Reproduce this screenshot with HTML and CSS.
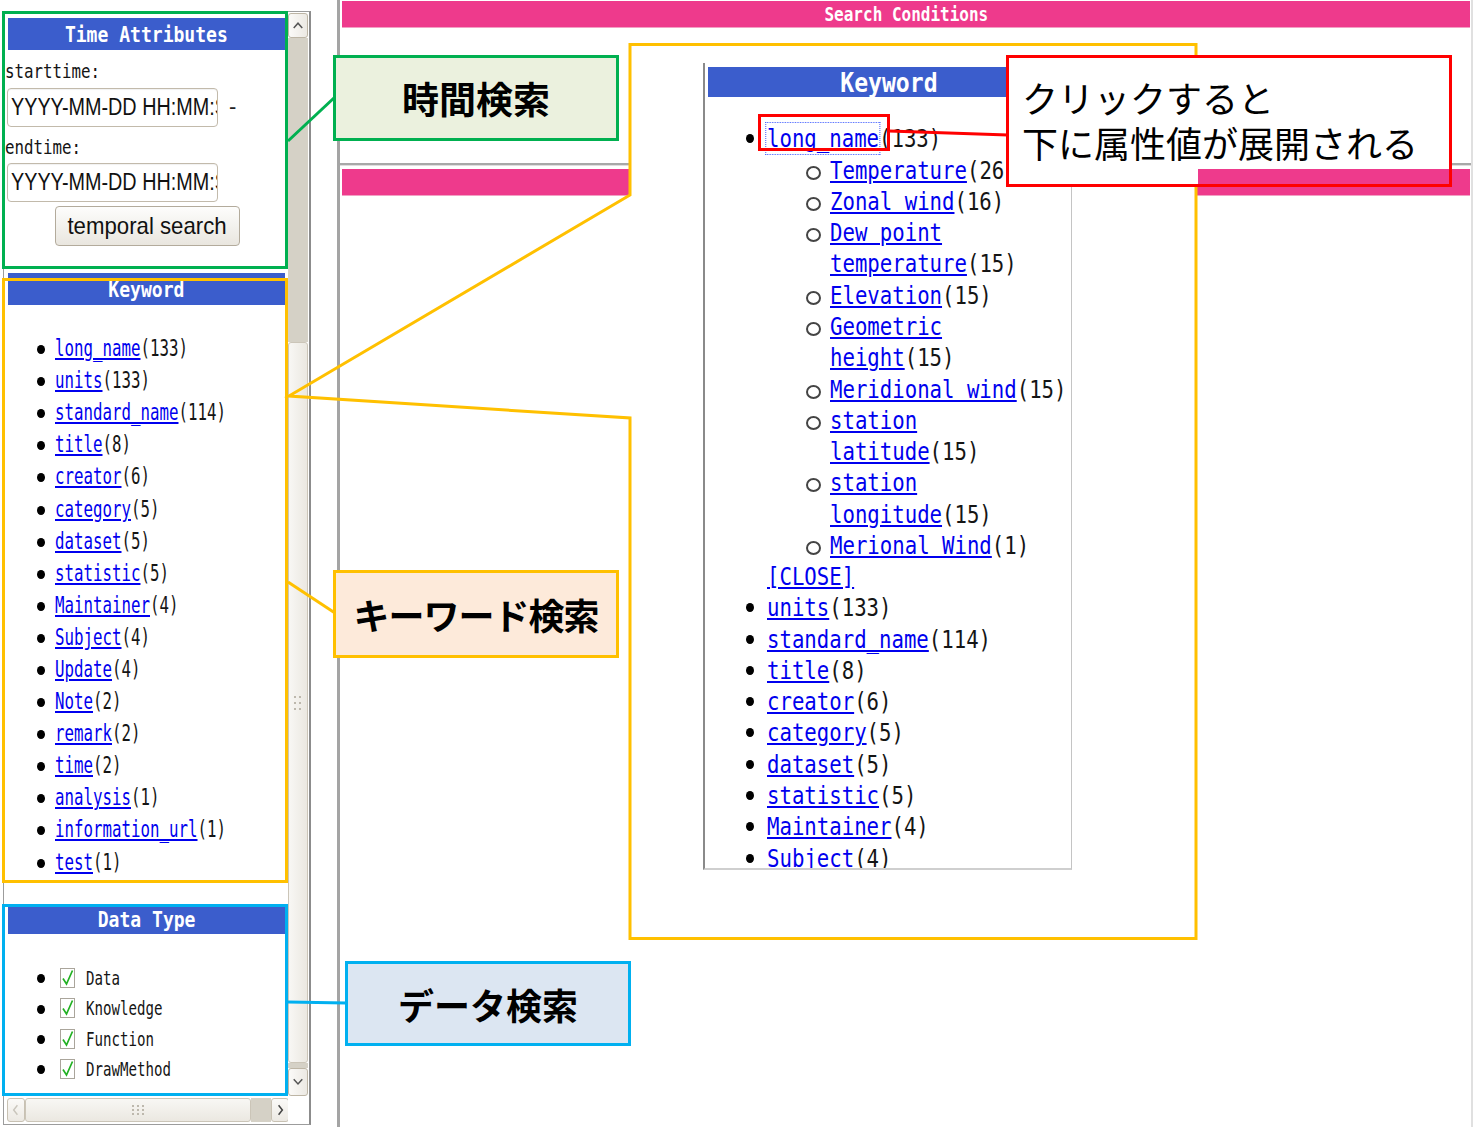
FILE: index.html
```html
<!DOCTYPE html>
<html lang="ja">
<head>
<meta charset="utf-8">
<title>Search Conditions</title>
<link rel="stylesheet" href="styles.css">
</head>
<body>
<div class="page">
  <aside class="left-frame">
    <div class="lf-content">
      <div class="sec-head time-head"><span class="sq-c hb">Time Attributes</span></div>
      <div class="lbl lbl-start"><span class="sq lb">starttime:</span></div>
      <div class="field-row">
        <div class="field"><span class="sq fv">YYYY-MM-DD HH:MM:SS</span></div>
        <span class="dash">-</span>
      </div>
      <div class="lbl lbl-end"><span class="sq lb">endtime:</span></div>
      <div class="field-row">
        <div class="field"><span class="sq fv">YYYY-MM-DD HH:MM:SS</span></div>
      </div>
      <div class="btn-row"><button class="btn" type="button"><span class="sq-c bt">temporal search</span></button></div>

      <div class="sec-head kw-head"><span class="sq-c hb">Keyword</span></div>
      <ul class="kw-list">
        <li><span class="sq t"><a href="#">long_name</a>(133)</span></li>
        <li><span class="sq t"><a href="#">units</a>(133)</span></li>
        <li><span class="sq t"><a href="#">standard_name</a>(114)</span></li>
        <li><span class="sq t"><a href="#">title</a>(8)</span></li>
        <li><span class="sq t"><a href="#">creator</a>(6)</span></li>
        <li><span class="sq t"><a href="#">category</a>(5)</span></li>
        <li><span class="sq t"><a href="#">dataset</a>(5)</span></li>
        <li><span class="sq t"><a href="#">statistic</a>(5)</span></li>
        <li><span class="sq t"><a href="#">Maintainer</a>(4)</span></li>
        <li><span class="sq t"><a href="#">Subject</a>(4)</span></li>
        <li><span class="sq t"><a href="#">Update</a>(4)</span></li>
        <li><span class="sq t"><a href="#">Note</a>(2)</span></li>
        <li><span class="sq t"><a href="#">remark</a>(2)</span></li>
        <li><span class="sq t"><a href="#">time</a>(2)</span></li>
        <li><span class="sq t"><a href="#">analysis</a>(1)</span></li>
        <li><span class="sq t"><a href="#">information_url</a>(1)</span></li>
        <li><span class="sq t"><a href="#">test</a>(1)</span></li>
      </ul>

      <div class="sec-head dt-head"><span class="sq-c hb">Data Type</span></div>
      <ul class="dt-list">
        <li><svg class="cb" width="15" height="20" viewBox="0 0 15 20"><rect x="0.5" y="0.5" width="14" height="19" fill="#fff" stroke="#aaa59b"/><path d="M3 10.5 L6.5 16 L12.5 2.5" fill="none" stroke="#22b022" stroke-width="1.7"/></svg><span class="sq d">Data</span></li>
        <li><svg class="cb" width="15" height="20" viewBox="0 0 15 20"><rect x="0.5" y="0.5" width="14" height="19" fill="#fff" stroke="#aaa59b"/><path d="M3 10.5 L6.5 16 L12.5 2.5" fill="none" stroke="#22b022" stroke-width="1.7"/></svg><span class="sq d">Knowledge</span></li>
        <li><svg class="cb" width="15" height="20" viewBox="0 0 15 20"><rect x="0.5" y="0.5" width="14" height="19" fill="#fff" stroke="#aaa59b"/><path d="M3 10.5 L6.5 16 L12.5 2.5" fill="none" stroke="#22b022" stroke-width="1.7"/></svg><span class="sq d">Function</span></li>
        <li><svg class="cb" width="15" height="20" viewBox="0 0 15 20"><rect x="0.5" y="0.5" width="14" height="19" fill="#fff" stroke="#aaa59b"/><path d="M3 10.5 L6.5 16 L12.5 2.5" fill="none" stroke="#22b022" stroke-width="1.7"/></svg><span class="sq d">DrawMethod</span></li>
      </ul>
    </div>

    <div class="vscroll">
      <div class="sb-btn sb-up"><svg width="19" height="24" viewBox="0 0 19 24"><polyline points="5,14 9.5,9 14,14" fill="none" stroke="#555" stroke-width="1.6"/></svg></div>
      <div class="sb-track sb-track-top"></div>
      <div class="sb-thumb"><svg width="10" height="16" viewBox="0 0 10 16"><g fill="#bdb8ad"><rect x="1" y="1" width="2" height="2"/><rect x="6" y="1" width="2" height="2"/><rect x="1" y="7" width="2" height="2"/><rect x="6" y="7" width="2" height="2"/><rect x="1" y="13" width="2" height="2"/><rect x="6" y="13" width="2" height="2"/></g></svg></div>
      <div class="sb-track sb-track-bot"></div>
      <div class="sb-btn sb-down"><svg width="19" height="26" viewBox="0 0 19 26"><polyline points="5,10 9.5,15 14,10" fill="none" stroke="#555" stroke-width="1.6"/></svg></div>
    </div>

    <div class="hscroll">
      <div class="hb-btn hb-left"><svg width="17" height="22" viewBox="0 0 17 22"><polyline points="10,6 6,11 10,16" fill="none" stroke="#c9c5bc" stroke-width="1.5"/></svg></div>
      <div class="hb-thumb"><svg width="12" height="10" viewBox="0 0 12 10"><g fill="#bdb8ad"><rect x="0" y="0" width="2" height="2"/><rect x="5" y="0" width="2" height="2"/><rect x="10" y="0" width="2" height="2"/><rect x="0" y="4" width="2" height="2"/><rect x="5" y="4" width="2" height="2"/><rect x="10" y="4" width="2" height="2"/><rect x="0" y="8" width="2" height="2"/><rect x="5" y="8" width="2" height="2"/><rect x="10" y="8" width="2" height="2"/></g></svg></div>
      <div class="hb-track"></div>
      <div class="hb-btn hb-right"><svg width="17" height="22" viewBox="0 0 17 22"><polyline points="7,6 11,11 7,16" fill="none" stroke="#444" stroke-width="1.6"/></svg></div>
    </div>
    <div class="corner"></div>
  </aside>

  <main class="right-frame">
    <section class="top-frame">
      <div class="pink-bar"><span class="sq-c pb">Search Conditions</span></div>
    </section>
    <section class="bottom-frame">
      <div class="pink-bar"></div>
    </section>
  </main>
</div>

<!-- zoomed inset pasted on the slide -->
<div class="zoom-area"></div>
<div class="inset">
  <div class="in-head"><span class="sq-c ihb">Keyword</span></div>
  <ul class="in-list">
    <li class="item">
      <span class="sq t"><a class="focus" href="#">long_name</a>(133)</span>
      <ul class="sub-list">
        <li class="sub"><span class="sq t"><a href="#">Temperature</a>(26)</span></li>
        <li class="sub"><span class="sq t"><a href="#">Zonal wind</a>(16)</span></li>
        <li class="sub"><span class="sq t"><a href="#">Dew point<br>temperature</a>(15)</span></li>
        <li class="sub"><span class="sq t"><a href="#">Elevation</a>(15)</span></li>
        <li class="sub"><span class="sq t"><a href="#">Geometric<br>height</a>(15)</span></li>
        <li class="sub"><span class="sq t"><a href="#">Meridional wind</a>(15)</span></li>
        <li class="sub"><span class="sq t"><a href="#">station<br>latitude</a>(15)</span></li>
        <li class="sub"><span class="sq t"><a href="#">station<br>longitude</a>(15)</span></li>
        <li class="sub"><span class="sq t"><a href="#">Merional Wind</a>(1)</span></li>
      </ul>
      <span class="sq t close"><a href="#">[CLOSE]</a></span>
    </li>
    <li class="item"><span class="sq t"><a href="#">units</a>(133)</span></li>
    <li class="item"><span class="sq t"><a href="#">standard_name</a>(114)</span></li>
    <li class="item"><span class="sq t"><a href="#">title</a>(8)</span></li>
    <li class="item"><span class="sq t"><a href="#">creator</a>(6)</span></li>
    <li class="item"><span class="sq t"><a href="#">category</a>(5)</span></li>
    <li class="item"><span class="sq t"><a href="#">dataset</a>(5)</span></li>
    <li class="item"><span class="sq t"><a href="#">statistic</a>(5)</span></li>
    <li class="item"><span class="sq t"><a href="#">Maintainer</a>(4)</span></li>
    <li class="item"><span class="sq t"><a href="#">Subject</a>(4)</span></li>
    <li class="item"><span class="sq t"><a href="#">Update</a>(4)</span></li>
  </ul>
</div>

<svg class="annot" width="1475" height="1127" viewBox="0 0 1475 1127">
  <g fill="none" stroke-width="3">
    <rect x="3.5" y="12.5" width="283" height="255" stroke="#00b050"/>
    <rect x="3.5" y="279.5" width="283" height="602" stroke="#ffc000"/>
    <rect x="3.5" y="905.5" width="283" height="189" stroke="#00b0f0"/>
    <line x1="288" y1="141" x2="335" y2="97" stroke="#00b050"/>
    <path d="M630,195 L289,396 L630,418 V938.5 H1196 V44.5 H630 Z" stroke="#ffc000" stroke-linejoin="miter"/>
    <line x1="288" y1="582" x2="335" y2="613" stroke="#ffc000"/>
    <line x1="288" y1="1002" x2="346" y2="1003" stroke="#00b0f0"/>
    <rect x="759.5" y="115.5" width="129" height="34" stroke="#ff0000"/>
    <line x1="889" y1="131" x2="1008" y2="135" stroke="#ff0000"/>
  </g>
</svg>

<div class="callout">クリックすると<br>下に属性値が展開される</div>
<div class="label label-time">時間検索</div>
<div class="label label-kw">キーワード検索</div>
<div class="label label-data">データ検索</div>
</body>
</html>
```

FILE: styles.css
```css
* { box-sizing: border-box; }
html, body { margin: 0; padding: 0; }
body {
  width: 1475px;
  height: 1127px;
  overflow: hidden;
  position: relative;
  background: #fff;
  font-family: "DejaVu Sans Mono", monospace;
  color: #151515;
}
a { color: #0000ee; text-decoration: underline; }
ul { list-style: none; margin: 0; padding: 0; }

.page { display: flex; height: 1127px; }

/* condensed text (screenshot is squeezed horizontally) */
.sq { display: inline-block; white-space: nowrap; transform-origin: 0 50%; }
.sq-c { display: inline-block; white-space: nowrap; transform-origin: 50% 50%; }

/* ---------- left frame ---------- */
.left-frame {
  margin: 11px 0 0 3px;
  width: 308px;
  height: 1114px;
  border: 1px solid #9c9c9c;
  border-right: 2px solid #8c8c8c;
  display: grid;
  grid-template-columns: 284px 21px;
  grid-template-rows: 1086px 26px;
  background: #fff;
  flex: none;
}
.lf-content { overflow: hidden; display: flex; flex-direction: column; }

.sec-head {
  margin: 0 3px 0 4px;
  height: 32px;
  background: #3b5dcc;
  color: #fff;
  display: flex;
  align-items: center;
  justify-content: center;
  flex: none;
}
.hb { font-weight: bold; font-size: 22px; transform: scaleX(0.82); }
.time-head { margin-top: 6px; }
.kw-head { margin-top: 27px; }
.dt-head { margin-top: 28px; height: 28px; }

.lbl { flex: none; padding-left: 1px; }
.lb { font-size: 20px; transform: scaleX(0.79); }
.lbl-start { margin-top: 4px; height: 34px; line-height: 34px; }
.lbl-end { height: 36px; padding-top: 4px; line-height: 32px; }

.field-row { display: flex; align-items: center; height: 39px; flex: none; }
.field {
  margin-left: 3px;
  width: 211px;
  height: 39px;
  border: 1px solid #c2baab;
  border-radius: 4px;
  background: #fff;
  overflow: hidden;
  display: flex;
  align-items: center;
  padding-left: 3px;
  box-shadow: inset 0 1px 1px rgba(0,0,0,0.06);
}
.fv { font-family: "Liberation Sans", Arial, sans-serif; font-size: 23px; color: #111; transform: scaleX(0.86); }
.dash { font-family: "Liberation Sans", Arial, sans-serif; font-size: 22px; margin-left: 11px; margin-top: -2px; color: #222; }

.btn-row { margin-top: 4px; height: 40px; flex: none; }
.btn {
  margin: 0 0 0 51px;
  width: 185px;
  height: 40px;
  padding: 0;
  border: 1px solid #b3ab9c;
  border-radius: 4px;
  background: linear-gradient(#fdfdfc, #e9e6df);
  display: flex;
  align-items: center;
  justify-content: center;
  color: #111;
}
.bt { font-family: "Liberation Sans", Arial, sans-serif; font-size: 24px; transform: scaleX(0.925); }

.kw-list { margin-top: 27px; padding-left: 33px; flex: none; }
.kw-list li {
  height: 32.1px;
  display: grid;
  grid-template-columns: 18px auto;
  align-items: center;
}
.kw-list li::before {
  content: "";
  width: 8px;
  height: 9px;
  border-radius: 50%;
  background: #000;
  margin-top: 3px;
}
.kw-list .t { font-size: 23px; transform: scaleX(0.686); }

.dt-list { margin-top: 29px; padding-left: 33px; flex: none; }
.dt-list li {
  height: 30.4px;
  display: grid;
  grid-template-columns: 23px 26px auto;
  align-items: center;
}
.dt-list li::before {
  content: "";
  width: 8px;
  height: 9px;
  border-radius: 50%;
  background: #000;
  margin-top: 2px;
}
.cb { display: block; }
.d { font-size: 20px; transform: scaleX(0.706); }

/* scrollbars */
.vscroll { display: flex; flex-direction: column; padding-right: 1px; }
.sb-btn {
  flex: none;
  border: 1px solid #bdb5a5;
  border-radius: 3px;
  background: linear-gradient(to right, #fbfaf8, #ece9e3);
  display: flex;
  align-items: center;
  justify-content: center;
}
.sb-up { margin-top: 1px; height: 25px; }
.sb-down { height: 28px; }
.sb-track { background: #d5d1c6; flex: none; }
.sb-track-top { height: 304px; }
.sb-track-bot { height: 5px; }
.sb-thumb {
  flex: none;
  height: 721px;
  border: 1px solid #cbc5b8;
  border-radius: 3px;
  background: linear-gradient(to right, #f8f7f4, #ebe8e1);
  display: flex;
  align-items: center;
  justify-content: center;
}

.hscroll {
  display: flex;
  margin: 0 0 2px 3px;
  height: 24px;
  align-self: end;
}
.hb-btn {
  flex: none;
  border: 1px solid #c8c1b3;
  border-radius: 3px;
  background: linear-gradient(#fbfaf8, #ece9e3);
  display: flex;
  align-items: center;
  justify-content: center;
}
.hb-left { width: 18px; }
.hb-right { width: 18px; }
.hb-thumb {
  flex: none;
  width: 226px;
  border: 1px solid #cbc5b8;
  border-radius: 3px;
  background: linear-gradient(#f8f7f4, #ebe8e1);
  display: flex;
  align-items: center;
  justify-content: center;
}
.hb-track { flex: none; width: 20px; background: #d5d1c6; }
.corner { background: #fff; }

/* ---------- right frame ---------- */
.right-frame {
  margin: 0 2px 0 26px;
  flex: 1;
  border-left: 3px solid #a4a4a4;
  border-right: 2px solid #e0e0e0;
  display: flex;
  flex-direction: column;
}
.top-frame { height: 163px; flex: none; padding-top: 1px; }
.pink-bar {
  margin: 0 1px 0 2px;
  height: 27px;
  background: #ee3a8c;
  border-bottom: 1px solid #f2a0c4;
  display: flex;
  align-items: center;
  justify-content: center;
}
.pb { color: #fff; font-weight: bold; font-size: 20px; transform: scaleX(0.8); }
.bottom-frame {
  flex: 1;
  border-top: 2px solid #a8a8a8;
  box-shadow: inset 0 1px 0 #dedede;
  padding-top: 4px;
}

/* ---------- zoomed inset (overlay on slide) ---------- */
.zoom-area {
  position: absolute;
  left: 630px;
  top: 44px;
  width: 566px;
  height: 895px;
  background: #fff;
}
.inset {
  position: absolute;
  left: 703px;
  top: 63px;
  width: 369px;
  height: 807px;
  background: #fff;
  border-left: 2px solid #8a8a8a;
  border-right: 1px solid #c4c4c4;
  border-bottom: 2px solid #cfcfcf;
  overflow: hidden;
}
.in-head {
  margin: 4px 2px 0 3px;
  height: 30px;
  background: #3b5dcc;
  color: #fff;
  display: flex;
  align-items: center;
  justify-content: center;
}
.ihb { font-weight: bold; font-size: 27px; transform: scaleX(0.855); }
.in-list { margin-top: 26.4px; padding-left: 41px; }
.in-list .t { font-size: 25px; line-height: 31.27px; transform: scaleX(0.827); }
.item {
  display: grid;
  grid-template-columns: 21px 1fr;
  align-items: start;
}
.item::before {
  content: "";
  width: 8px;
  height: 9px;
  border-radius: 50%;
  background: #000;
  margin-top: 11px;
}
.sub-list { grid-column: 2; margin-left: 41px; }
.close { grid-column: 2; }
.sub {
  display: grid;
  grid-template-columns: 22px 1fr;
  align-items: start;
}
.sub::before {
  content: "";
  width: 11px;
  height: 10px;
  border: 2px solid #444;
  border-radius: 50%;
  margin: 11px 0 0 -2px;
}
.focus { outline: 1px dotted #3050ff; outline-offset: 1px; }

/* ---------- annotation overlay ---------- */
.annot { position: absolute; left: 0; top: 0; pointer-events: none; }

.callout {
  position: absolute;
  left: 1006px;
  top: 55px;
  width: 446px;
  height: 132px;
  border: 3px solid #ff0000;
  /* white fill, except where the lower pink bar shows through at bottom right */
  background:
    linear-gradient(#fff, #fff) 0 0 / 100% 111px no-repeat,
    linear-gradient(#fff, #fff) 0 0 / 189px 100% no-repeat;
  padding: 17px 0 0 13px;
  font-family: "Noto Sans CJK JP", sans-serif;
  font-size: 36px;
  line-height: 45px;
  color: #000;
}
.label {
  position: absolute;
  width: 286px;
  border: 3px solid;
  display: flex;
  align-items: center;
  justify-content: center;
  font-family: "Noto Sans CJK JP", sans-serif;
  font-weight: bold;
  font-size: 36px;
  color: #000;
}
.label-time { left: 333px; top: 55px; height: 86px; background: #ebf1de; border-color: #00b050; font-size: 37px; }
.label-kw { left: 333px; top: 570px; height: 88px; background: #fdeada; border-color: #ffc000; letter-spacing: -1px; }
.label-data { left: 345px; top: 961px; height: 85px; background: #dce6f2; border-color: #00b0f0; }
```
